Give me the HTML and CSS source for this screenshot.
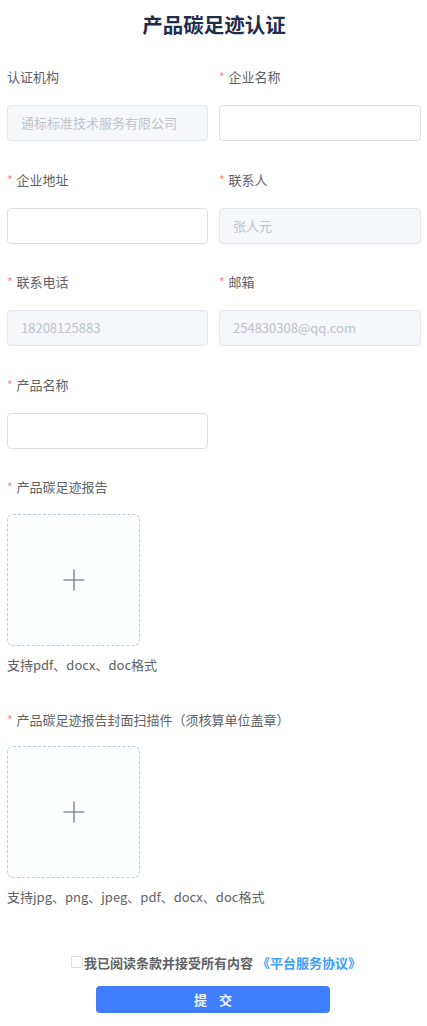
FILE: index.html
```html
<!DOCTYPE html>
<html lang="zh">
<head>
<meta charset="utf-8">
<link rel="stylesheet" href="styles.css">
</head>
<body>
<div class="page">
  <h1 class="title">产品碳足迹认证</h1>
  <div class="grid">
    <div class="item">
      <div class="label">认证机构</div>
      <div class="input disabled">通标标准技术服务有限公司</div>
    </div>
    <div class="item">
      <div class="label"><span class="req">*</span>企业名称</div>
      <div class="input"></div>
    </div>
    <div class="item">
      <div class="label"><span class="req">*</span>企业地址</div>
      <div class="input"></div>
    </div>
    <div class="item">
      <div class="label"><span class="req">*</span>联系人</div>
      <div class="input disabled">张人元</div>
    </div>
    <div class="item">
      <div class="label"><span class="req">*</span>联系电话</div>
      <div class="input disabled">18208125883</div>
    </div>
    <div class="item">
      <div class="label"><span class="req">*</span>邮箱</div>
      <div class="input disabled">254830308@qq.com</div>
    </div>
    <div class="item">
      <div class="label"><span class="req">*</span>产品名称</div>
      <div class="input"></div>
    </div>
  </div>

  <div class="upload-item">
    <div class="label"><span class="req">*</span>产品碳足迹报告</div>
    <div class="upload">
      <svg width="22" height="22" viewBox="0 0 22 22"><path d="M11 0.5V21.5M0.5 11H21.5" stroke="#8c939d" stroke-width="1.6" fill="none"/></svg>
    </div>
    <div class="hint">支持pdf、docx、doc格式</div>
  </div>

  <div class="upload-item second">
    <div class="label"><span class="req">*</span>产品碳足迹报告封面扫描件（须核算单位盖章）</div>
    <div class="upload">
      <svg width="22" height="22" viewBox="0 0 22 22"><path d="M11 0.5V21.5M0.5 11H21.5" stroke="#8c939d" stroke-width="1.6" fill="none"/></svg>
    </div>
    <div class="hint">支持jpg、png、jpeg、pdf、docx、doc格式</div>
  </div>

  <div class="agree">
    <span class="checkbox"></span><span class="agree-text">我已阅读条款并接受所有内容</span><span class="link">《平台服务协议》</span>
  </div>
  <div class="actions">
    <button class="submit">提&nbsp;&nbsp;&nbsp;&nbsp;交</button>
  </div>
</div>
</body>
</html>
```

FILE: styles.css
```css
* { box-sizing: border-box; }
html, body {
  margin: 0;
  padding: 0;
  background: #ffffff;
  font-family: "Noto Sans CJK SC", "Noto Sans", sans-serif;
}
.page {
  padding: 0 6px 0 7px;
}
.title {
  margin: 0;
  padding-top: 10px;
  height: 39px;
  line-height: 28px;
  font-size: 20.5px;
  font-weight: 700;
  color: #1f2d4d;
  text-align: center;
}
.grid {
  margin-top: 28px;
  display: grid;
  grid-template-columns: 201px 202px;
  column-gap: 11px;
}
.item {
  display: flex;
  flex-direction: column;
  gap: 18px;
  margin-bottom: 28.5px;
}
.label {
  height: 20px;
  line-height: 20px;
  font-size: 13px;
  color: #606266;
  white-space: nowrap;
}
.req {
  color: #f78989;
  margin-right: 4px;
  font-size: 12px;
}
.input {
  height: 36px;
  border: 1px solid #dcdfe6;
  border-radius: 4px;
  background: #fff;
  padding: 0 13px;
  line-height: 34px;
  font-size: 13px;
  color: #c0c4cc;
  white-space: nowrap;
  overflow: hidden;
}
.input.disabled {
  background: #f5f7fa;
  border-color: #e4e7ed;
}
.upload-item {
  display: flex;
  flex-direction: column;
  align-items: flex-start;
}
.upload-item .label {
  margin-bottom: 16.5px;
}
.upload {
  width: 133px;
  height: 132px;
  border: 1px dashed #c0ccda;
  border-radius: 6px;
  background: #fbfdff;
  display: flex;
  align-items: center;
  justify-content: center;
}
.hint {
  margin-top: 9px;
  height: 20px;
  line-height: 20px;
  font-size: 13px;
  color: #606266;
}
.upload-item.second {
  margin-top: 35px;
}
.agree {
  margin-top: 45px;
  display: flex;
  align-items: center;
  justify-content: center;
  height: 20px;
  font-size: 13px;
  font-weight: 700;
  padding-left: 4px;
}
.checkbox {
  width: 12px;
  height: 12px;
  border: 1px solid #dcdfe6;
  border-radius: 2px;
  background: #fff;
  margin-right: 1px;
}
.agree-text {
  color: #606266;
}
.link {
  color: #409eff;
  margin-left: 4px;
}
.actions {
  margin-top: 14px;
  display: flex;
  justify-content: center;
  padding-right: 2px;
}
.submit {
  width: 234px;
  height: 27px;
  border: none;
  border-radius: 4px;
  background: #3f7fff;
  color: #eef3ff;
  font-family: "Noto Sans CJK SC", "Noto Sans", sans-serif;
  font-size: 13px;
  font-weight: 700;
  padding: 0;
  line-height: 27px;
}
```
